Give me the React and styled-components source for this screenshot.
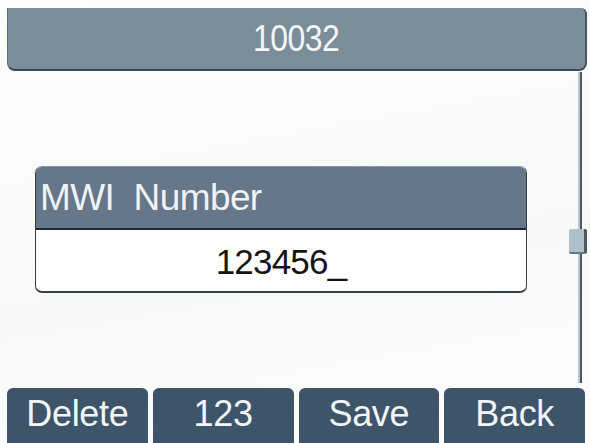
import React from 'react'
import styled, { createGlobalStyle } from 'styled-components'

const GlobalStyle = createGlobalStyle`
  html, body {
    margin: 0;
    padding: 0;
    background: #fbfcfc;
  }
  body {
    font-family: 'Liberation Sans', Arial, sans-serif;
  }
`

const softKeys = ['Delete', '123', 'Save', 'Back']

const App = () => {
  return (
    <Screen>
      <GlobalStyle />
      <TitleBar>
        <TitleText>10032</TitleText>
      </TitleBar>
      <Body>
        <Content>
          <Dialog>
            <DialogTitle>MWI&nbsp;&nbsp;Number</DialogTitle>
            <DialogInput>123456_</DialogInput>
          </Dialog>
        </Content>
        <ScrollTrack>
          <Thumb style={{ top: 157 }} />
        </ScrollTrack>
      </Body>
      <SoftKeys>
        {softKeys.map((label) => (
          <SoftKey key={label}>{label}</SoftKey>
        ))}
      </SoftKeys>
    </Screen>
  )
}

const Screen = styled.div`
  width: 590px;
  height: 443px;
  display: flex;
  flex-direction: column;
  overflow: hidden;
  background: linear-gradient(170deg, #fdfdfd 0%, #f7f8f8 60%, #fdfdfd 100%);
`

const TitleBar = styled.header`
  margin: 8px 3px 0 7px;
  height: 61px;
  display: flex;
  align-items: center;
  justify-content: center;
  background: #7b8d99;
  border-left: 1px solid #5d6e79;
  border-right: 2px solid #48555e;
  border-bottom: 2px solid #3b4852;
  border-radius: 0 6px 8px 8px;
`

const TitleText = styled.span`
  color: #f4f7f8;
  font-size: 37px;
  display: inline-block;
  transform: scaleX(0.86);
  letter-spacing: -0.5px;
`

const Body = styled.main`
  flex: 1;
  display: flex;
  min-height: 0;
`

const Content = styled.div`
  flex: 1;
  display: flex;
  align-items: center;
  padding: 0 39px 0 35px;
`

const Dialog = styled.section`
  flex: 1;
  display: flex;
  flex-direction: column;
  border: 1.5px solid #3a3f45;
  border-top-color: #8796a4;
  border-bottom-width: 2px;
  border-radius: 7px;
  overflow: hidden;
  background: #ffffff;
`

const DialogTitle = styled.div`
  height: 61px;
  display: flex;
  align-items: center;
  padding-left: 4px;
  background: #667789;
  border-bottom: 2px solid #1f2a33;
  color: #eef2f5;
  font-size: 37px;
  letter-spacing: -0.6px;
  white-space: nowrap;
`

const DialogInput = styled.div`
  height: 61px;
  display: flex;
  align-items: center;
  justify-content: center;
  color: #151515;
  font-size: 35px;
  letter-spacing: -0.8px;
  padding-top: 2px;
  box-sizing: border-box;
`

const ScrollTrack = styled.div`
  position: relative;
  width: 24px;
  margin: 1px 0 5px;

  &::before {
    content: '';
    position: absolute;
    top: 0;
    bottom: 0;
    left: 12px;
    width: 4px;
    background: linear-gradient(90deg, #b7cad4 0 40%, #4f565b 40% 100%);
  }
`

const Thumb = styled.div`
  position: absolute;
  left: 3px;
  width: 18px;
  height: 25px;
  box-sizing: border-box;
  background: #aec0ca;
  border-right: 3px solid #4e575d;
  border-bottom: 2px solid #6b7780;
  border-radius: 2px;
`

const SoftKeys = styled.nav`
  height: 55px;
  display: flex;
  gap: 5px;
  padding: 0 5px 0 7px;
`

const SoftKey = styled.button`
  flex: 1;
  border: none;
  margin: 0;
  padding: 0 0 4px;
  background: #3e5468;
  border-radius: 6px 6px 0 0;
  color: #f2f5f7;
  font-family: 'Liberation Sans', Arial, sans-serif;
  font-size: 36px;
  letter-spacing: -0.3px;
  cursor: pointer;
`

export default App
